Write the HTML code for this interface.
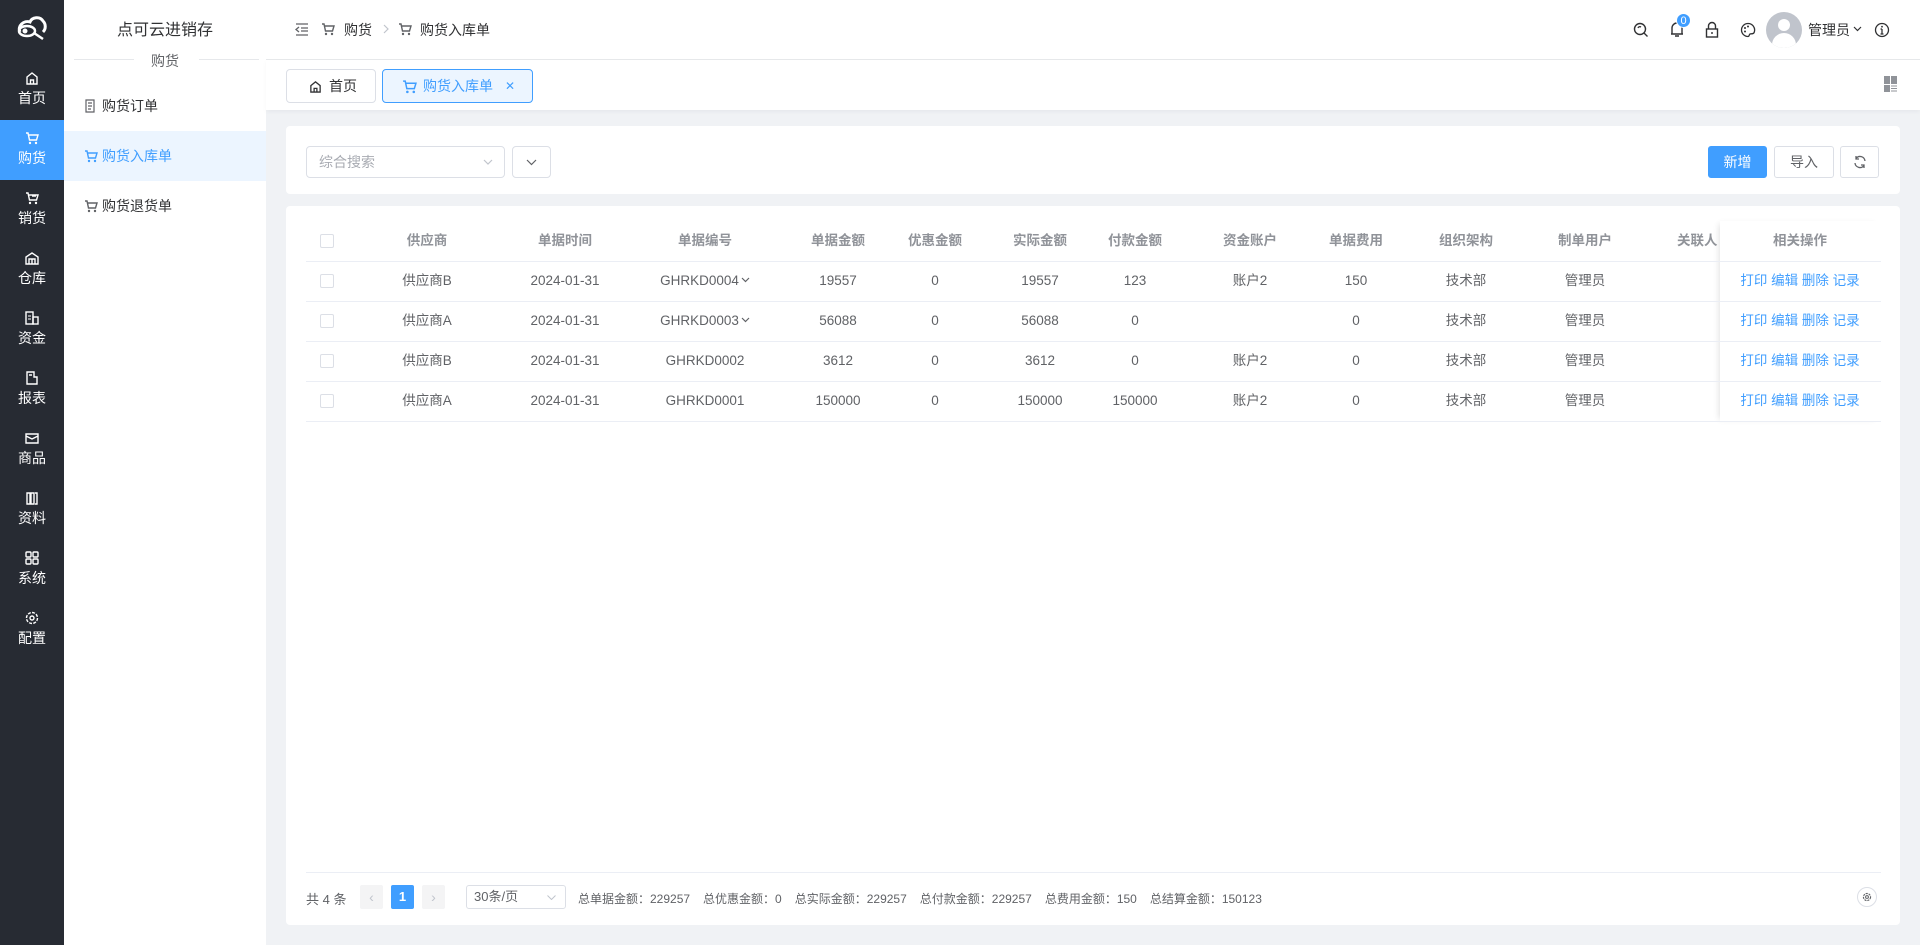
<!DOCTYPE html>
<html><head><meta charset="utf-8"><style>
*{box-sizing:border-box;margin:0;padding:0}
body{width:1920px;height:945px;overflow:hidden;background:#f0f2f5;font-family:"Liberation Sans","Noto Sans CJK SC",sans-serif;font-size:14px;color:#606266;position:relative}
.abs{position:absolute}
#nav{left:0;top:0;width:64px;height:945px;background:#272b33}
.ni{position:absolute;left:0;width:64px;height:60px;color:#fff;text-align:center;font-size:14px}
.ni svg{display:block;margin:11px auto 3px}
.ni.on{background:#409eff}
#side{left:64px;top:0;width:202px;height:945px;background:#fff}
.mi{position:absolute;left:0;width:202px;height:50px;line-height:50px;padding-left:38px;font-size:14px;color:#303133}
.mi svg{position:absolute;left:20px;top:18px}
.mi.on{background:#ecf5ff;color:#409eff}
#top{left:266px;top:0;width:1654px;height:60px;background:#fff;border-bottom:1px solid #e6e8eb}
#tabs{left:266px;top:60px;width:1654px;height:50px;background:#fff;box-shadow:0 2px 4px rgba(0,0,0,.04)}
.tab{position:absolute;top:9px;height:34px;border:1px solid #dcdfe6;border-radius:4px;line-height:32px;font-size:14px;color:#303133}
.card{background:#fff;border-radius:4px;left:286px;width:1614px}
.btn{position:absolute;top:146px;height:32px;border:1px solid #dcdfe6;border-radius:3px;line-height:30px;text-align:center;font-size:14px;color:#606266;background:#fff}
.c{position:absolute;width:140px;text-align:center;font-size:13.5px;line-height:40px;height:40px;white-space:nowrap;color:#606266}
.h{color:#909399;font-weight:bold}
.line{position:absolute;left:306px;width:1575px;height:1px;background:#ebeef5}
.cb{position:absolute;left:320px;width:14px;height:14px;border:1px solid #dcdfe6;border-radius:2px;background:#fff}
.c.op{color:#409eff}
.dd{display:inline-block;width:9px;height:6px;margin-left:2px;vertical-align:2px}
</style></head><body>

<div id="nav" class="abs">
<svg class="abs" style="left:16px;top:14px" width="32" height="28" viewBox="0 0 32 28"><path d="M4 18c-3-6 4-12 10-10 2-5 10-6 13-1 3 3 3 8 0 11" fill="none" stroke="#fff" stroke-width="3"/><ellipse cx="11" cy="17" rx="8" ry="5" fill="none" stroke="#fff" stroke-width="2.5"/><circle cx="9" cy="17" r="2.5" fill="#fff"/><path d="M18 19l9 6" stroke="#fff" stroke-width="2.5"/></svg>
<div class="ni" style="top:60px"><svg width="14" height="14" viewBox="0 0 14 14"><path d="M2 6l5-4 5 4v7H2z M5.5 13V9h3v4" fill="none" stroke="#fff" stroke-width="1.4"/></svg>首页</div>
<div class="ni on" style="top:120px"><svg width="14" height="14" viewBox="0 0 14 14"><path d="M1 2h2l1.5 7h7L13 4H4" fill="none" stroke="#fff" stroke-width="1.4"/><circle cx="5" cy="12" r="1.2" fill="#fff"/><circle cx="11" cy="12" r="1.2" fill="#fff"/></svg>购货</div>
<div class="ni" style="top:180px"><svg width="14" height="14" viewBox="0 0 14 14"><path d="M1 2h2l1.5 7h7L13 4H4M7 5h4" fill="none" stroke="#fff" stroke-width="1.4"/><circle cx="5" cy="12" r="1.2" fill="#fff"/><circle cx="11" cy="12" r="1.2" fill="#fff"/></svg>销货</div>
<div class="ni" style="top:240px"><svg width="14" height="14" viewBox="0 0 14 14"><path d="M1 13V6l6-4 6 4v7zM4 13V8h6v5M7 8v5" fill="none" stroke="#fff" stroke-width="1.4"/></svg>仓库</div>
<div class="ni" style="top:300px"><svg width="14" height="14" viewBox="0 0 14 14"><rect x="1" y="1" width="7" height="12" fill="none" stroke="#fff" stroke-width="1.4"/><rect x="8" y="6" width="5" height="7" fill="none" stroke="#fff" stroke-width="1.4"/><path d="M3 5h3M3 8h3" stroke="#fff"/></svg>资金</div>
<div class="ni" style="top:360px"><svg width="14" height="14" viewBox="0 0 14 14"><path d="M2 1h7v5h3v7H2z M4 4h3" fill="none" stroke="#fff" stroke-width="1.4"/></svg>报表</div>
<div class="ni" style="top:420px"><svg width="14" height="14" viewBox="0 0 14 14"><path d="M1 3h12v9H1zM1 5l6 3 6-3" fill="none" stroke="#fff" stroke-width="1.4"/></svg>商品</div>
<div class="ni" style="top:480px"><svg width="14" height="14" viewBox="0 0 14 14"><path d="M2 2h3v11H2zM6 2h3v11H6zM10 2h2v11h-2" fill="none" stroke="#fff" stroke-width="1.4"/></svg>资料</div>
<div class="ni" style="top:540px"><svg width="14" height="14" viewBox="0 0 14 14"><rect x="1" y="1" width="5" height="5" rx="1" fill="none" stroke="#fff" stroke-width="1.4"/><rect x="8" y="1" width="5" height="5" rx="1" fill="none" stroke="#fff" stroke-width="1.4"/><rect x="1" y="8" width="5" height="5" rx="1" fill="none" stroke="#fff" stroke-width="1.4"/><rect x="8" y="8" width="5" height="5" rx="1" fill="none" stroke="#fff" stroke-width="1.4"/></svg>系统</div>
<div class="ni" style="top:600px"><svg width="14" height="14" viewBox="0 0 14 14"><circle cx="7" cy="7" r="5.5" fill="none" stroke="#fff" stroke-width="1.4" stroke-dasharray="3 1.3"/><circle cx="7" cy="7" r="2" fill="none" stroke="#fff" stroke-width="1.4"/></svg>配置</div>
</div>

<div id="side" class="abs">
<div class="abs" style="left:0;top:16px;width:202px;text-align:center;font-size:16px;color:#303133">点可云进销存</div>
<div class="abs" style="left:10px;top:59px;width:60px;height:1px;background:#e6e8eb"></div>
<div class="abs" style="left:135px;top:59px;width:60px;height:1px;background:#e6e8eb"></div>
<div class="abs" style="left:0;top:51px;width:202px;text-align:center;font-size:14px;color:#606266">购货</div>
<div class="mi" style="top:81px"><svg width="12" height="14" viewBox="0 0 12 14"><path d="M2 1h8v12H2zM4 4h4M4 7h4M4 10h3" fill="none" stroke="#606266" stroke-width="1.2"/></svg>购货订单</div>
<div class="mi on" style="top:131px"><svg width="14" height="14" viewBox="0 0 14 14"><path d="M1 2h2l1.5 7h7L13 4H4" fill="none" stroke="#409eff" stroke-width="1.4"/><circle cx="5" cy="12" r="1.2" fill="#409eff"/><circle cx="11" cy="12" r="1.2" fill="#409eff"/></svg>购货入库单</div>
<div class="mi" style="top:181px"><svg width="14" height="14" viewBox="0 0 14 14"><path d="M1 2h2l1.5 7h7L13 4H4" fill="none" stroke="#606266" stroke-width="1.4"/><circle cx="5" cy="12" r="1.2" fill="#606266"/><circle cx="11" cy="12" r="1.2" fill="#606266"/></svg>购货退货单</div>
</div>

<div id="top" class="abs">
<svg class="abs" style="left:29px;top:23px" width="14" height="13" viewBox="0 0 14 13"><path d="M1 1h12M6 5h7M6 8h7M1 12h12M4 4L1 6.5 4 9" fill="none" stroke="#606266" stroke-width="1.3"/></svg>
<svg class="abs" style="left:55px;top:22px" width="14" height="14" viewBox="0 0 14 14"><path d="M1 2h2l1.5 7h7L13 4H4" fill="none" stroke="#606266" stroke-width="1.4"/><circle cx="5" cy="12" r="1.2" fill="#606266"/><circle cx="11" cy="12" r="1.2" fill="#606266"/></svg>
<div class="abs" style="left:78px;top:20px;font-size:14px;color:#303133">购货</div>
<svg class="abs" style="left:117px;top:24px" width="6" height="10" viewBox="0 0 6 10"><path d="M1 1l4 4-4 4" fill="none" stroke="#c0c4cc" stroke-width="1.2"/></svg>
<svg class="abs" style="left:132px;top:22px" width="14" height="14" viewBox="0 0 14 14"><path d="M1 2h2l1.5 7h7L13 4H4" fill="none" stroke="#606266" stroke-width="1.4"/><circle cx="5" cy="12" r="1.2" fill="#606266"/><circle cx="11" cy="12" r="1.2" fill="#606266"/></svg>
<div class="abs" style="left:154px;top:20px;font-size:14px;color:#303133">购货入库单</div>
<svg class="abs" style="left:1367px;top:22px" width="16" height="16" viewBox="0 0 16 16"><circle cx="7" cy="7" r="5.5" fill="none" stroke="#303133" stroke-width="1.4"/><path d="M11 11l3.5 3.5M5 6a2 2 0 0 1 3-1" stroke="#303133" stroke-width="1.4" fill="none"/></svg>
<svg class="abs" style="left:1403px;top:21px" width="16" height="17" viewBox="0 0 16 17"><path d="M3 13V7a5 5 0 0 1 10 0v6H2h12M6 15h4" fill="none" stroke="#303133" stroke-width="1.4"/></svg>
<div class="abs" style="left:1410px;top:13px;width:15px;height:15px;border-radius:8px;background:#409eff;color:#fff;font-size:11px;line-height:15px;text-align:center;border:1px solid #fff">0</div>
<svg class="abs" style="left:1439px;top:21px" width="14" height="17" viewBox="0 0 14 17"><path d="M3.5 8V5a3.5 3.5 0 0 1 7 0v3" fill="none" stroke="#303133" stroke-width="1.4"/><rect x="1.5" y="8" width="11" height="8" fill="none" stroke="#303133" stroke-width="1.4"/><path d="M7 11v2" stroke="#303133" stroke-width="1.4"/></svg>
<svg class="abs" style="left:1474px;top:22px" width="16" height="16" viewBox="0 0 16 16"><path d="M8 1.5a6.5 6.5 0 1 0 0 13c1.5 0 1-2 2-2.5s4 .5 4.3-2A6.5 6.5 0 0 0 8 1.5z" fill="none" stroke="#303133" stroke-width="1.3"/><circle cx="5" cy="6" r="1" fill="#303133"/><circle cx="8" cy="4.5" r="1" fill="#303133"/><circle cx="5" cy="9.5" r="1" fill="#303133"/></svg>
<div class="abs" style="left:1500px;top:12px;width:36px;height:36px;border-radius:18px;background:#c0c4cc;overflow:hidden"><div class="abs" style="left:12px;top:7px;width:12px;height:12px;border-radius:6px;background:#fff"></div><div class="abs" style="left:6px;top:21px;width:24px;height:20px;border-radius:12px 12px 0 0;background:#fff"></div></div>
<div class="abs" style="left:1542px;top:20px;font-size:14px;color:#303133">管理员</div>
<svg class="abs" style="left:1587px;top:26px" width="9" height="6" viewBox="0 0 9 6"><path d="M1 1l3.5 3.5L8 1" fill="none" stroke="#303133" stroke-width="1.2"/></svg>
<svg class="abs" style="left:1608px;top:22px" width="16" height="16" viewBox="0 0 16 16"><circle cx="8" cy="8" r="6.5" fill="none" stroke="#303133" stroke-width="1.3"/><path d="M8 7v5M6.5 12h3M6.5 7H8" stroke="#303133" stroke-width="1.3"/><circle cx="8" cy="4.7" r=".9" fill="#303133"/></svg>
</div>

<div id="tabs" class="abs">
<div class="tab" style="left:20px;width:90px;padding-left:42px"><svg class="abs" style="left:22px;top:10px" width="13" height="13" viewBox="0 0 14 14"><path d="M2 6l5-4 5 4v7H2z M5.5 13V9h3v4" fill="none" stroke="#303133" stroke-width="1.4"/></svg>首页</div>
<div class="tab" style="left:116px;width:151px;padding-left:40px;border-color:#409eff;background:#ecf5ff;color:#409eff"><svg class="abs" style="left:19px;top:9px" width="15" height="15" viewBox="0 0 14 14"><path d="M1 2h2l1.5 7h7L13 4H4" fill="none" stroke="#409eff" stroke-width="1.4"/><circle cx="5" cy="12" r="1.2" fill="#409eff"/><circle cx="11" cy="12" r="1.2" fill="#409eff"/></svg>购货入库单<span style="position:absolute;left:122px;font-size:12px">✕</span></div>
<svg class="abs" style="left:1618px;top:16px" width="14" height="16" viewBox="0 0 14 16"><rect x="0" y="0" width="6" height="8" fill="#909399"/><rect x="7" y="0" width="6" height="8" fill="#909399"/><rect x="0" y="9" width="6" height="7" fill="#909399"/><path d="M7 10h6M7 12.5h6M7 15h6" stroke="#909399"/></svg>
</div>

<div class="abs card" style="top:126px;height:68px"></div>
<div class="abs" style="left:306px;top:146px;width:199px;height:32px;border:1px solid #dcdfe6;border-radius:4px;line-height:30px;padding-left:12px;color:#a8abb2">综合搜索<svg class="abs" style="left:176px;top:12px" width="10" height="6" viewBox="0 0 10 6"><path d="M1 1l4 4 4-4" fill="none" stroke="#c0c4cc" stroke-width="1.2"/></svg></div>
<div class="abs" style="left:512px;top:146px;width:39px;height:32px;border:1px solid #dcdfe6;border-radius:4px"><svg class="abs" style="left:13px;top:12px" width="11" height="7" viewBox="0 0 11 7"><path d="M1 1l4.5 4.5L10 1" fill="none" stroke="#606266" stroke-width="1.2"/></svg></div>
<div class="btn" style="left:1708px;width:59px;background:#409eff;border-color:#409eff;color:#fff">新增</div>
<div class="btn" style="left:1774px;width:60px">导入</div>
<div class="btn" style="left:1840px;width:39px"><svg style="margin-top:8px" width="14" height="14" viewBox="0 0 14 14"><path d="M12 6A5 5 0 0 0 3 3.5M2 8a5 5 0 0 0 9 2.5M3 1v3h3M11 13v-3H8" fill="none" stroke="#606266" stroke-width="1.3"/></svg></div>

<div class="abs card" style="top:206px;height:719px"></div>
<div class="abs" style="left:1720px;top:221px;width:161px;height:201px;background:#fff;box-shadow:-4px 0 6px -3px rgba(0,0,0,.12)"></div>
<div class="line" style="top:261px"></div><div class="line" style="top:301px"></div><div class="line" style="top:341px"></div><div class="line" style="top:381px"></div><div class="line" style="top:421px"></div>
<div class="cb" style="top:234px"></div><div class="cb" style="top:274px"></div><div class="cb" style="top:314px"></div><div class="cb" style="top:354px"></div><div class="cb" style="top:394px"></div>

<div style="position:absolute;left:0;top:221px">
<div class="c h" style="left:357px">供应商</div><div class="c h" style="left:495px">单据时间</div><div class="c h" style="left:635px">单据编号</div><div class="c h" style="left:768px">单据金额</div><div class="c h" style="left:865px">优惠金额</div><div class="c h" style="left:970px">实际金额</div><div class="c h" style="left:1065px">付款金额</div><div class="c h" style="left:1180px">资金账户</div><div class="c h" style="left:1286px">单据费用</div><div class="c h" style="left:1396px">组织架构</div><div class="c h" style="left:1515px">制单用户</div><div class="c h" style="left:1677px;width:43px;text-align:left;overflow:hidden">关联人</div><div class="c h" style="left:1730px">相关操作</div>
</div>
<div style="position:absolute;left:0;top:261px">
<div class="c" style="left:357px">供应商B</div><div class="c" style="left:495px">2024-01-31</div><div class="c" style="left:635px">GHRKD0004<svg class="dd" viewBox="0 0 9 6"><path d="M1 1l3.5 3.5L8 1" fill="none" stroke="#606266" stroke-width="1.2"/></svg></div><div class="c" style="left:768px">19557</div><div class="c" style="left:865px">0</div><div class="c" style="left:970px">19557</div><div class="c" style="left:1065px">123</div><div class="c" style="left:1180px">账户2</div><div class="c" style="left:1286px">150</div><div class="c" style="left:1396px">技术部</div><div class="c" style="left:1515px">管理员</div><div class="c op" style="left:1730px">打印 编辑 删除 记录</div>
</div>
<div style="position:absolute;left:0;top:301px">
<div class="c" style="left:357px">供应商A</div><div class="c" style="left:495px">2024-01-31</div><div class="c" style="left:635px">GHRKD0003<svg class="dd" viewBox="0 0 9 6"><path d="M1 1l3.5 3.5L8 1" fill="none" stroke="#606266" stroke-width="1.2"/></svg></div><div class="c" style="left:768px">56088</div><div class="c" style="left:865px">0</div><div class="c" style="left:970px">56088</div><div class="c" style="left:1065px">0</div><div class="c" style="left:1286px">0</div><div class="c" style="left:1396px">技术部</div><div class="c" style="left:1515px">管理员</div><div class="c op" style="left:1730px">打印 编辑 删除 记录</div>
</div>
<div style="position:absolute;left:0;top:341px">
<div class="c" style="left:357px">供应商B</div><div class="c" style="left:495px">2024-01-31</div><div class="c" style="left:635px">GHRKD0002</div><div class="c" style="left:768px">3612</div><div class="c" style="left:865px">0</div><div class="c" style="left:970px">3612</div><div class="c" style="left:1065px">0</div><div class="c" style="left:1180px">账户2</div><div class="c" style="left:1286px">0</div><div class="c" style="left:1396px">技术部</div><div class="c" style="left:1515px">管理员</div><div class="c op" style="left:1730px">打印 编辑 删除 记录</div>
</div>
<div style="position:absolute;left:0;top:381px">
<div class="c" style="left:357px">供应商A</div><div class="c" style="left:495px">2024-01-31</div><div class="c" style="left:635px">GHRKD0001</div><div class="c" style="left:768px">150000</div><div class="c" style="left:865px">0</div><div class="c" style="left:970px">150000</div><div class="c" style="left:1065px">150000</div><div class="c" style="left:1180px">账户2</div><div class="c" style="left:1286px">0</div><div class="c" style="left:1396px">技术部</div><div class="c" style="left:1515px">管理员</div><div class="c op" style="left:1730px">打印 编辑 删除 记录</div>
</div>

<div class="line" style="top:872px"></div>
<div class="abs" style="left:306px;top:889px;font-size:13px;color:#606266">共 4 条</div>
<div class="abs" style="left:360px;top:885px;width:23px;height:24px;background:#f4f4f5;border-radius:2px;color:#c0c4cc;text-align:center;line-height:24px">‹</div>
<div class="abs" style="left:391px;top:885px;width:23px;height:24px;background:#409eff;border-radius:2px;color:#fff;text-align:center;line-height:24px;font-weight:bold;font-size:13px">1</div>
<div class="abs" style="left:422px;top:885px;width:23px;height:24px;background:#f4f4f5;border-radius:2px;color:#c0c4cc;text-align:center;line-height:24px">›</div>
<div class="abs" style="left:466px;top:885px;width:100px;height:24px;border:1px solid #dcdfe6;border-radius:3px;line-height:22px;padding-left:7px;font-size:13px">30条/页<svg class="abs" style="left:80px;top:9px" width="9" height="5" viewBox="0 0 9 5"><path d="M.5.5l4 4 4-4" fill="none" stroke="#c0c4cc"/></svg></div>
<div class="abs" style="left:578px;top:890px;font-size:12px;color:#606266;word-spacing:1px">总单据金额：229257 &nbsp; 总优惠金额：0 &nbsp; 总实际金额：229257 &nbsp; 总付款金额：229257 &nbsp; 总费用金额：150 &nbsp; 总结算金额：150123</div>
<div class="abs" style="left:1857px;top:887px;width:20px;height:20px;border:1px solid #dcdfe6;border-radius:10px"><svg class="abs" style="left:4px;top:4px" width="10" height="10" viewBox="0 0 14 14"><circle cx="7" cy="7" r="5" fill="none" stroke="#606266" stroke-width="1.6" stroke-dasharray="3 1.3"/><circle cx="7" cy="7" r="2" fill="none" stroke="#606266" stroke-width="1.4"/></svg></div>
</body></html>
